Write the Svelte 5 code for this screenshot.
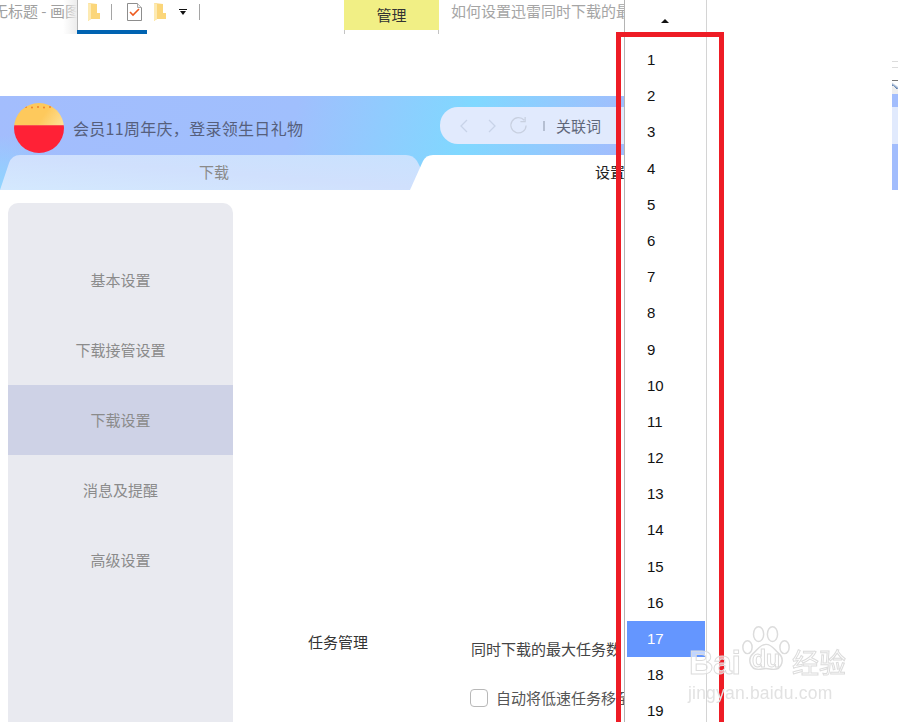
<script>
  const numbers = Array.from({ length: 19 }, (_, i) => i + 1);
  const menu = ['基本设置', '下载接管设置', '下载设置', '消息及提醒', '高级设置'];
  const dots = [16, 21, 26, 31, 36, 41];
</script>

<div class="page">
  <header class="taskbar">
    <div class="title">无标题 - 画图</div>
    <div class="quick">
      <svg class="folder" viewBox="0 0 12 18"><path d="M0 0l9 1v9h3v6H3l-3 2z" fill="#fbd67a"/><path d="M0 0l3 1v15l-3 2z" fill="#fdeab2"/></svg>
      <span class="sep"></span>
      <svg class="doc" viewBox="0 0 15 18"><path d="M.5.5h10l4 4v13H.5z" fill="#fff" stroke="#8d8d8d"/><path d="M10.5.5v4h4" fill="#eee" stroke="#aaa"/><path d="M3 9l3 3 6-6" fill="none" stroke="#ee5a1e" stroke-width="1.6"/></svg>
      <svg class="folder second" viewBox="0 0 12 18"><path d="M0 0l9 1v9h3v6H3l-3 2z" fill="#fbd67a"/><path d="M0 0l3 1v15l-3 2z" fill="#fdeab2"/></svg>
      <svg class="more" viewBox="0 0 8 6"><path d="M0 0h8v1H0zM1 2h6L4 6z" fill="#111"/></svg>
      <span class="sep last"></span>
    </div>
    <div class="manage"><span>管理</span></div>
    <div class="doc-title">如何设置迅雷同时下载的最大任务数</div>
  </header>

  <section class="app">
    <div class="head">
      <div class="banner">
        <div class="promo">
          <div class="badge">
            <svg viewBox="0 0 50 50">
              {#each dots as x, i}
                <circle cx={x - 4 + i} cy={i % 2 ? 4.5 : 4} r="1" fill="#f0822a"/>
              {/each}
            </svg>
          </div>
          <span>会员11周年庆，登录领生日礼物</span>
        </div>
        <div class="search">
          <svg viewBox="0 0 10 16"><path d="M8 2L2 8l6 6" fill="none" stroke="#c8d3e8" stroke-width="1.3"/></svg>
          <svg viewBox="0 0 10 16"><path d="M2 2l6 6-6 6" fill="none" stroke="#c8d3e8" stroke-width="1.3"/></svg>
          <svg class="reload" viewBox="0 0 20 20"><path d="M16 4.5a8 8 0 1 0 2 5.5M17 1v5h-5" fill="none" stroke="#c8d0e0" stroke-width="1.3"/></svg>
          <i></i>
          <span>关联词</span>
        </div>
      </div>
      <div class="tabs">
        <svg class="tab-shape" viewBox="0 0 624 35">
          <defs>
            <linearGradient id="t" x1="0" x2="1" y1="1" y2="0">
              <stop offset="0" stop-color="#d4e9fe"/><stop offset=".5" stop-color="#d0e0fd"/><stop offset="1" stop-color="#c9e2fe"/>
            </linearGradient>
          </defs>
          <path d="M0 35L9 8Q12 0 20 0H406Q413 0 417 6L432 35Z" fill="url(#t)"/>
          <path d="M410 35L423 6Q426 0 433 0H624V35Z" fill="#fff"/>
        </svg>
        <span class="tab">下载</span>
        <span class="tab active">设置</span>
      </div>
    </div>
    <div class="content">
      <nav class="side">
        {#each menu as item, i}
          <div class="item" class:on={i === 2}>{item}</div>
        {/each}
      </nav>
      <div class="settings">
        <div class="group">任务管理</div>
        <div class="rows">
          <div class="row">同时下载的最大任务数</div>
          <label class="row check"><b></b>自动将低速任务移至队尾</label>
        </div>
      </div>
    </div>
  </section>

  <div class="edge"><span class="rule"></span><span class="rule"></span><span class="thumb"></span><span class="pill"></span></div>

  <div class="dropdown">
    <svg class="up" viewBox="0 0 8 4"><path d="M4 0l4 4H0z" fill="#111"/></svg>
    <ul>
      {#each numbers as n}
        <li class:sel={n === 17}>{n}</li>
      {/each}
    </ul>
  </div>
  <div class="redbox"></div>

  <div class="mark">
    <div class="brand">
      <span class="bai">Bai</span>
      <svg class="paw" viewBox="0 0 54 50">
        <g fill="rgba(255,255,255,.5)" stroke="#dcdcdc" stroke-width="1.6">
          <ellipse cx="7" cy="23" rx="5" ry="7"/><ellipse cx="19" cy="9" rx="5.5" ry="8"/><ellipse cx="34" cy="9" rx="5.5" ry="8"/><ellipse cx="47" cy="23" rx="5" ry="7"/>
          <path d="M27 20c7 0 9 6 14 10 6 5 4 17-6 17-3 0-5-1-8-1s-5 1-8 1c-10 0-12-12-6-17 5-4 7-10 14-10z"/>
        </g>
      </svg>
      <span class="du">du</span>
      <span class="jy">经验</span>
    </div>
    <div class="url">jingyan.baidu.com</div>
  </div>
</div>

<style>
  :global(body) { margin: 0; background: #fff; }
  .page {
    position: relative;
    width: 898px;
    height: 722px;
    overflow: hidden;
    background: #fff;
    font-family: "Noto Sans CJK SC", "Liberation Sans", sans-serif;
    font-size: 15px;
  }
  .taskbar { height: 34px; display: flex; align-items: flex-start; }
  .title {
    width: 77px; height: 34px; flex: none; overflow: hidden; white-space: nowrap;
    text-indent: -7px; line-height: 22px; color: #a0a0a0; position: relative;
  }
  .title::after {
    content: ""; position: absolute; right: 0; top: 0; bottom: 0; width: 14px;
    background: linear-gradient(90deg, rgba(240,240,240,0), #ececec);
  }
  .quick {
    width: 267px; height: 30px; flex: none; display: flex; align-items: center;
    border-left: 1px solid #b5b5b5; box-sizing: border-box; padding: 0 0 6px 10px;
    position: relative;
  }
  .quick::after { content: ""; position: absolute; left: -1px; bottom: -4px; width: 70px; height: 4px; background: #0063b1; }
  .folder { width: 12px; height: 18px; flex: none; }
  .folder.second { margin-left: 12px; }
  .sep { width: 1px; height: 16px; background: #a5a5a5; margin-left: 11px; flex: none; }
  .doc { width: 15px; height: 18px; margin-left: 15px; flex: none; }
  .more { width: 8px; height: 6px; margin-left: 13px; flex: none; }
  .sep.last { margin-left: 12px; }
  .manage { width: 95px; height: 34px; flex: none; border: solid #c4c4c4; border-width: 0 1px; box-sizing: border-box; }
  .manage span {
    display: block; margin: 0 -1px; height: 30px; background: #f1ef85; color: #333;
    text-align: center; line-height: 30px;
  }
  .doc-title { margin-left: 12px; width: 173px; overflow: hidden; white-space: nowrap; color: #a5a5a5; line-height: 22px; }

  .app { margin-top: 62px; }
  .head {
    width: 624px; height: 94px; overflow: hidden;
    background:
      radial-gradient(circle at 0 100%, #8ed6ff 0, rgba(142,214,255,0) 55px),
      linear-gradient(105deg, #a3bdfd 0, #a0bffd 290px, #80d8ff 460px, #a2bdfd 610px);
  }
  .banner { height: 59px; display: flex; box-sizing: border-box; padding: 11px 0 0 14px; align-items: flex-start; }
  .promo { display: flex; align-items: center; gap: 9px; color: #565f7c; width: 426px; flex: none; margin-top: -4px; font-size: 16px; letter-spacing: .3px; }
  .badge {
    width: 50px; height: 50px; border-radius: 50%; flex: none; overflow: hidden;
    background:
      linear-gradient(180deg, rgba(0,0,0,0) 43%, #f0806c 43%, #ff2136 47%, #ff2136 100%),
      linear-gradient(125deg, #fec95c 45%, #fde097 75%, #fdc860);
  }
  .badge svg { display: block; width: 50px; height: 50px; }
  .search {
    width: 300px; height: 37px; border-radius: 18px; background: #e1eafd; flex: none;
    display: flex; align-items: center; box-sizing: border-box; padding-left: 19px; color: #5f6779;
  }
  .search svg { width: 10px; height: 16px; margin-right: 18px; flex: none; }
  .search .reload { width: 19px; height: 19px; margin: 0 15px 0 -6px; }
  .search i { width: 2px; height: 10px; background: #b5bfd2; margin-right: 11px; flex: none; }
  .tabs { height: 35px; position: relative; display: flex; }
  .tab-shape { position: absolute; left: 0; top: 0; width: 624px; height: 35px; }
  .tab { position: relative; width: 428px; flex: none; text-align: center; line-height: 34px; color: #8a8a8a; }
  .tab.active { width: 364px; color: #222; }
  .content { display: flex; padding: 13px 0 0 8px; }
  .side {
    width: 225px; height: 520px; flex: none; background: #e9eaf0; border-radius: 10px 10px 0 0;
    box-sizing: border-box; padding-top: 42px;
  }
  .item { height: 70px; line-height: 69px; text-align: center; color: #8b8b8b; }
  .item.on { background: #ced2e6; }
  .settings { display: flex; padding: 427px 0 0 75px; }
  .group { width: 163px; color: #333; line-height: 24px; }
  .rows { padding-top: 7px; width: 155px; overflow: hidden; }
  .row { color: #444; white-space: nowrap; line-height: 24px; height: 24px; }
  .check { display: flex; align-items: center; gap: 8px; margin-top: 25px; color: #555; }
  .check b { width: 18px; height: 18px; margin-left: -1px; border: 1px solid #b8b8b8; border-radius: 4px; flex: none; box-sizing: border-box; background: #fff; }
  .rows { margin-left: -1px; padding-left: 1px; }

  .edge { position: absolute; left: 892px; top: 61px; width: 6px; display: flex; flex-direction: column; }
  .rule { height: 1px; background: #dcdcdc; margin-bottom: 5px; }
  .thumb {
    height: 14px; margin-top: 7px; border-top: 1px solid #777; box-sizing: border-box;
    background: linear-gradient(35deg, #eee 50%, #5c7fb0 50%, #fff 70%);
  }
  .pill {
    height: 96px;
    background: linear-gradient(180deg, #a2bdfd 13px, #e1eafd 13px, #e1eafd 50px, #a2bdfd 50px);
  }

  .dropdown {
    position: absolute; left: 624px; top: 0; width: 83px; height: 722px; box-sizing: border-box;
    background: #fff; border: solid; border-width: 0 1px; border-color: #b4b4b4 #d4d4d4 #b4b4b4 #b4b4b4;
  }
  .up { position: absolute; left: 36px; top: 19px; width: 8px; height: 4px; }
  ul { list-style: none; margin: 0; padding: 42px 0 0 2px; width: 78px; }
  li {
    height: 36.2px; line-height: 36px; padding-left: 20px; box-sizing: border-box;
    font-family: "Liberation Sans", sans-serif; font-size: 15px; color: #111;
  }
  li.sel { background: #6496ff; color: #fff; }
  .redbox {
    position: absolute; left: 616px; top: 32px; width: 108px; height: 700px;
    box-sizing: border-box; border: 5px solid #ee1c25;
  }

  .mark { position: absolute; left: 688px; top: 625px; width: 165px; pointer-events: none; font-family: "Liberation Sans", sans-serif; filter: blur(.4px); }
  .brand { position: relative; height: 56px; }
  .bai, .du, .jy { position: absolute; color: rgba(255,255,255,.6); -webkit-text-stroke: 1px #dcdcdc; font-weight: 700; }
  .bai { left: 1px; top: 21px; font-size: 34px; line-height: 32px; letter-spacing: -.5px; }
  .paw { position: absolute; left: 53px; top: 0; width: 50px; height: 48px; }
  .du { left: 64px; top: 22px; font-size: 23px; line-height: 24px; }
  .jy { left: 104px; top: 22px; font-size: 27px; line-height: 30px; font-family: "Noto Sans CJK SC", sans-serif; font-weight: 400; }
  .url { color: #e2e2e2; font-size: 17.5px; line-height: 20px; margin-top: 2px; white-space: nowrap; letter-spacing: .2px; }
</style>
